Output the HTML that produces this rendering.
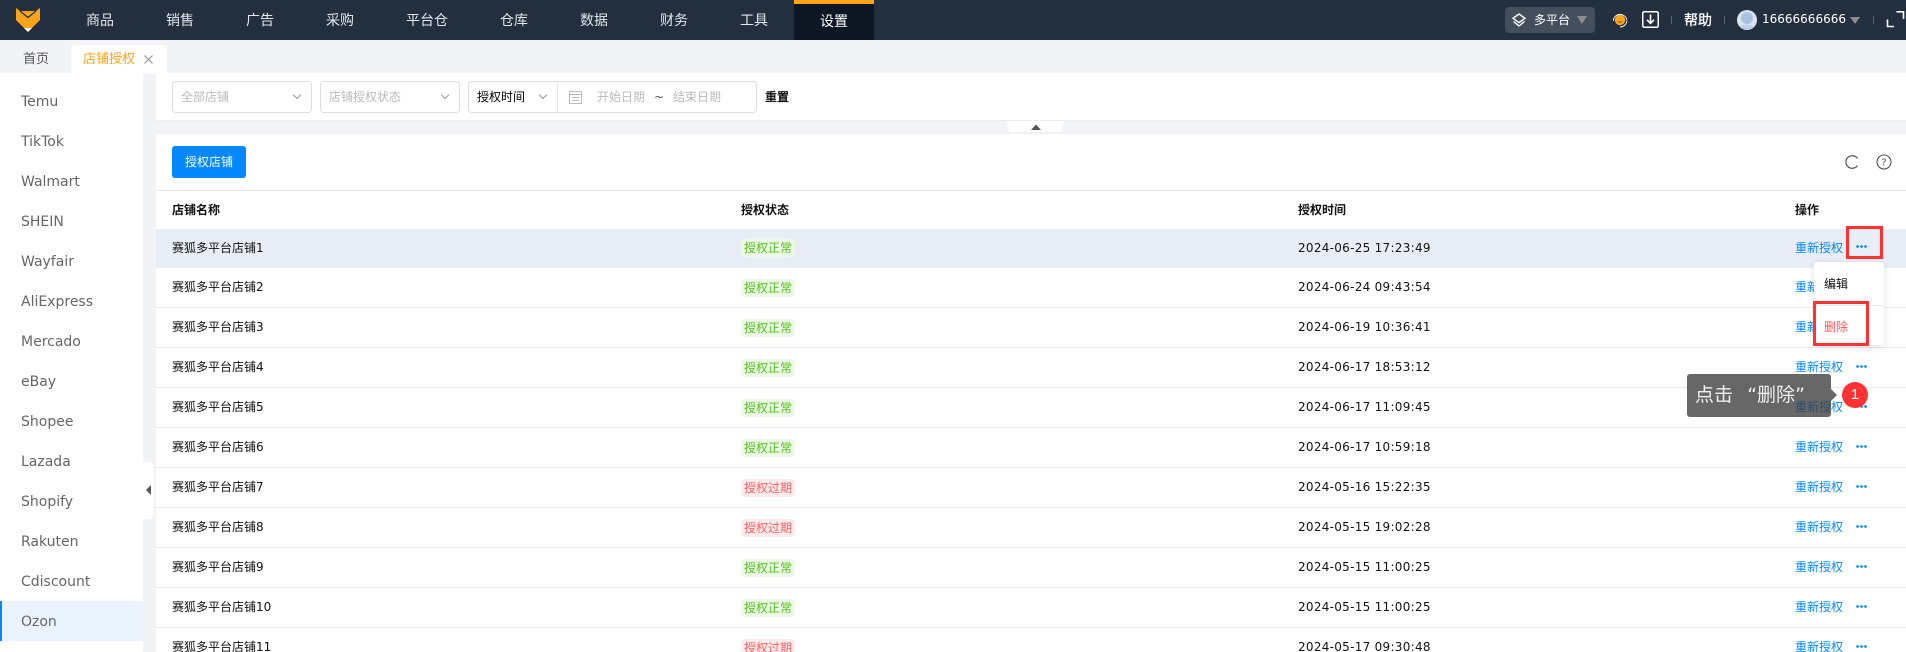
<!DOCTYPE html>
<html lang="zh"><head><meta charset="utf-8"><title>店铺授权</title>
<style>
*{box-sizing:border-box;margin:0;padding:0}
html,body{width:1906px;height:652px;overflow:hidden;background:#f2f3f7}
body{position:relative;font-family:"DejaVu Sans","Noto Sans CJK SC",sans-serif;font-size:12px;color:#111}
.a{position:absolute;white-space:nowrap}
#top{left:0;top:0;width:1906px;height:40px;background:#232f3f}
.nav{position:absolute;top:0;height:40px;line-height:43px;text-align:center;color:#e3e6ea;font-size:14px}
.sel{position:absolute;top:81px;height:32px;border:1px solid #dcdde2;border-radius:4px;background:#fff;line-height:30px;color:#bbb}
.chev{position:absolute;width:6px;height:6px;border-right:1px solid #999;border-bottom:1px solid #999;transform:rotate(45deg)}
.side{position:absolute;left:0;width:143px;height:40px;line-height:42px;padding-left:21px;font-size:14px;color:#666}
.row{position:absolute;left:156px;width:1750px;height:40px;border-bottom:1px solid #ebebeb;line-height:39px}
.row span{position:absolute;top:0;white-space:nowrap}
.n{left:16px}
.t{left:1142px;letter-spacing:.28px}
.o{left:1639px;color:#0488ff}
.row .d{left:1700px;width:11px;height:3px;top:17px;background:radial-gradient(circle at 1.5px 1.5px,#0488ff 1.2px,transparent 1.5px) 0 0/4px 3px repeat-x}
.row .g,.row .r{left:585px;top:11px;width:54px;height:18px;line-height:18px;border-radius:4px;text-align:center}
.g{background:#edf8e8;color:#52c41a}
.r{background:#ffeded;color:#ff5f5f}
.row.f{line-height:38px}
.row.f .g{top:10px}
.row.f .d{top:16px}
.th{position:absolute;top:191px;line-height:38px;font-weight:700;color:#111;white-space:nowrap}
.med{-webkit-text-stroke:.3px currentColor}
</style></head><body>

<div class="a" id="top"></div>
<svg class="a" style="left:14px;top:6px" width="28" height="28" viewBox="0 0 28 28">
<path d="M2 2 L6 5 L22 5 L26 2 V14 L14 26 L2 14Z" fill="#ffa31a"/>
<path d="M6 5 L14 11.5 L22 5" fill="none" stroke="#232f3f" stroke-width="1.3"/>
<path d="M10 22 H18 L14 26Z" fill="#fff"/>
</svg>
<div class="nav" style="left:60px;width:80px">商品</div>
<div class="nav" style="left:140px;width:80px">销售</div>
<div class="nav" style="left:220px;width:80px">广告</div>
<div class="nav" style="left:300px;width:80px">采购</div>
<div class="nav" style="left:380px;width:94px">平台仓</div>
<div class="nav" style="left:474px;width:80px">仓库</div>
<div class="nav" style="left:554px;width:80px">数据</div>
<div class="nav" style="left:634px;width:80px">财务</div>
<div class="nav" style="left:714px;width:80px">工具</div>
<div class="nav" style="left:794px;width:80px;background:#0d1723;border-top:4px solid #ffa31a;line-height:36px;color:#fff">设置</div>

<div class="a" style="left:1505px;top:7px;width:90px;height:26px;background:#454e5c;border-radius:4px"></div>
<svg class="a" style="left:1511px;top:12px" width="16" height="16" viewBox="0 0 16 16" fill="none" stroke="#fff" stroke-width="1.4"><path d="M8 2 L14 6.300 L8 10.600 L2 6.300Z"/><path d="M2.600 9.500 L8 14 L13.400 9.500"/></svg>
<div class="a" style="left:1534px;top:7px;line-height:26px;color:#fff;font-size:12px">多平台</div>
<div class="a" style="left:1577px;top:16px;border:5.500px solid transparent;border-top:8px solid #8a8d92;border-bottom:0"></div>
<svg class="a" style="left:1612px;top:11px" width="18" height="18" viewBox="0 0 18 18"><circle cx="8" cy="9" r="5.200" fill="#ffa31a"/><path d="M1.300 10A6.800 6.800 0 0 1 14.800 9M15 9.500A7 7 0 0 1 8 16" fill="none" stroke="#fff" stroke-width=".9"/><path d="M5.800 10.300q2.200 1.800 4.400 0" fill="none" stroke="#7a4a00" stroke-width=".9"/></svg>
<svg class="a" style="left:1642px;top:11px" width="17" height="17" viewBox="0 0 17 17" fill="none"><rect x=".75" y=".75" width="15.500" height="15.500" rx="1.500" stroke="#fff" stroke-width="1.500"/><path d="M8.500 3.500V12M5 8.800L8.500 12.400 12 8.800" stroke="#fff" stroke-width="1.600"/></svg>
<div class="a" style="left:1671px;top:16px;width:1px;height:8px;background:#5a6470"></div>
<div class="a med" style="left:1684px;top:0;line-height:42px;color:#fff;font-size:14px">帮助</div>
<div class="a" style="left:1724px;top:16px;width:1px;height:8px;background:#5a6470"></div>
<svg class="a" style="left:1737px;top:10px" width="20" height="20" viewBox="0 0 20 20"><circle cx="10" cy="10" r="10" fill="#dbe3ee"/><circle cx="10" cy="8" r="6" fill="#a9c2e4"/><path d="M3 17q7-5 14 0q-7 6-14 0Z" fill="#bcd0ea"/></svg>
<div class="a" style="left:1762px;top:0;line-height:39px;color:#fff">16666666666</div>
<div class="a" style="left:1850px;top:17px;border:5px solid transparent;border-top:7px solid #8a8d92;border-bottom:0"></div>
<div class="a" style="left:1873px;top:16px;width:1px;height:8px;background:#5a6470"></div>
<svg class="a" style="left:1886px;top:10px" width="20" height="20" viewBox="0 0 20 20" fill="none" stroke="#fff" stroke-width="1.600"><path d="M1.500 9.500V16.500H8M10.500 1.800H17.500V9"/></svg>

<!-- tabs -->
<div class="a" style="left:23px;top:45px;line-height:29px;font-size:13px;color:#555">首页</div>
<div class="a" style="left:71px;top:45px;width:96px;height:29px;background:#fff;border-radius:3px 3px 0 0"></div>
<div class="a" style="left:83px;top:45px;line-height:29px;font-size:13px;color:#ffa31a">店铺授权</div>
<svg class="a" style="left:144px;top:55px" width="9" height="9" viewBox="0 0 9 9" stroke="#8f8f8f" stroke-width="1"><path d="M.5 .5L8.500 8.500M8.500 .5L.5 8.500"/></svg>

<!-- sidebar -->
<div class="a" style="left:0;top:73px;width:143px;height:579px;background:#fff"></div>
<div class="side" style="top:81px">Temu</div>
<div class="side" style="top:121px">TikTok</div>
<div class="side" style="top:161px">Walmart</div>
<div class="side" style="top:201px">SHEIN</div>
<div class="side" style="top:241px">Wayfair</div>
<div class="side" style="top:281px">AliExpress</div>
<div class="side" style="top:321px">Mercado</div>
<div class="side" style="top:361px">eBay</div>
<div class="side" style="top:401px">Shopee</div>
<div class="side" style="top:441px">Lazada</div>
<div class="side" style="top:481px">Shopify</div>
<div class="side" style="top:521px">Rakuten</div>
<div class="side" style="top:561px">Cdiscount</div>
<div class="side" style="top:601px;background:#eaf3fe;border-left:2px solid #0488ff;padding-left:19px">Ozon</div>
<div class="a" style="left:143px;top:462px;width:11px;height:57px;background:#fff;border-radius:0 4px 4px 0"></div>
<div class="a" style="left:146px;top:485px;border:5px solid transparent;border-right:5px solid #555;border-left:0"></div>

<!-- filter -->
<div class="a" style="left:156px;top:73px;width:1750px;height:48px;background:#fff;border-bottom:1px solid #ececec"></div>
<div class="sel" style="left:172px;width:140px;padding-left:8px">全部店铺<i class="chev" style="right:11px;top:10px"></i></div>
<div class="sel" style="left:320px;width:140px;padding-left:8px">店铺授权状态<i class="chev" style="right:11px;top:10px"></i></div>
<div class="sel" style="left:468px;width:289px"></div>
<div class="a" style="left:477px;top:81px;line-height:32px;color:#000">授权时间</div>
<i class="chev" style="left:540px;top:92px"></i>
<div class="a" style="left:557px;top:82px;width:1px;height:30px;background:#e6e6e6"></div>
<svg class="a" style="left:569px;top:90px" width="13" height="14" viewBox="0 0 13 14" fill="none" stroke="#bbb"><rect x=".5" y="1.500" width="12" height="12"/><path d="M.5 4.500H12.500M3 7.500H10M3 10.500H10"/></svg>
<div class="a" style="left:597px;top:81px;line-height:32px;color:#bbb">开始日期</div>
<div class="a" style="left:654px;top:81px;line-height:32px;color:#555">~</div>
<div class="a" style="left:673px;top:81px;line-height:32px;color:#bbb">结束日期</div>
<div class="a med" style="left:765px;top:81px;line-height:32px;color:#000">重置</div>
<svg class="a" style="left:1007px;top:121px" width="58" height="12" viewBox="0 0 58 12"><path d="M0 0H57L55 10Q54.700 11 53 11H4Q2.300 11 2 10Z" fill="#fff"/><path d="M24 9L29 3.500 34 9Z" fill="#555"/></svg>

<!-- main -->
<div class="a" style="left:156px;top:134px;width:1750px;height:518px;background:#fff"></div>
<div class="a" style="left:172px;top:146px;width:74px;height:32px;background:#0488ff;border-radius:3px;color:#fff;text-align:center;line-height:32px">授权店铺</div>
<svg class="a" style="left:1844px;top:154px" width="16" height="16" viewBox="0 0 16 16" fill="none" stroke="#555" stroke-width="1.200"><path d="M13.500 4.500A6.300 6.300 0 1 0 13.500 11.500"/></svg>
<svg class="a" style="left:1876px;top:154px" width="16" height="16" viewBox="0 0 16 16"><circle cx="8" cy="8" r="7" fill="none" stroke="#555" stroke-width="1.100"/><text x="8" y="11.500" text-anchor="middle" font-size="10" fill="#555" font-family="DejaVu Sans">?</text></svg>
<div class="a" style="left:156px;top:190px;width:1750px;height:1px;background:#e5e5e5"></div>
<div class="th" style="left:172px">店铺名称</div>
<div class="th" style="left:741px">授权状态</div>
<div class="th" style="left:1298px">授权时间</div>
<div class="th" style="left:1795px">操作</div>

<div class="row f" style="top:229px;height:39px;background:#e9eef6;border-bottom:0"><span class="n">赛狐多平台店铺1</span><span class="g">授权正常</span><span class="t">2024-06-25 17:23:49</span><span class="o">重新授权</span><span class="d"></span></div>
<div class="row" style="top:268px"><span class="n">赛狐多平台店铺2</span><span class="g">授权正常</span><span class="t">2024-06-24 09:43:54</span><span class="o">重新授权</span><span class="d"></span></div>
<div class="row" style="top:308px"><span class="n">赛狐多平台店铺3</span><span class="g">授权正常</span><span class="t">2024-06-19 10:36:41</span><span class="o">重新授权</span><span class="d"></span></div>
<div class="row" style="top:348px"><span class="n">赛狐多平台店铺4</span><span class="g">授权正常</span><span class="t">2024-06-17 18:53:12</span><span class="o">重新授权</span><span class="d"></span></div>
<div class="row" style="top:388px"><span class="n">赛狐多平台店铺5</span><span class="g">授权正常</span><span class="t">2024-06-17 11:09:45</span><span class="o">重新授权</span><span class="d"></span></div>
<div class="row" style="top:428px"><span class="n">赛狐多平台店铺6</span><span class="g">授权正常</span><span class="t">2024-06-17 10:59:18</span><span class="o">重新授权</span><span class="d"></span></div>
<div class="row" style="top:468px"><span class="n">赛狐多平台店铺7</span><span class="r">授权过期</span><span class="t">2024-05-16 15:22:35</span><span class="o">重新授权</span><span class="d"></span></div>
<div class="row" style="top:508px"><span class="n">赛狐多平台店铺8</span><span class="r">授权过期</span><span class="t">2024-05-15 19:02:28</span><span class="o">重新授权</span><span class="d"></span></div>
<div class="row" style="top:548px"><span class="n">赛狐多平台店铺9</span><span class="g">授权正常</span><span class="t">2024-05-15 11:00:25</span><span class="o">重新授权</span><span class="d"></span></div>
<div class="row" style="top:588px"><span class="n">赛狐多平台店铺10</span><span class="g">授权正常</span><span class="t">2024-05-15 11:00:25</span><span class="o">重新授权</span><span class="d"></span></div>
<div class="row" style="top:628px"><span class="n">赛狐多平台店铺11</span><span class="r">授权过期</span><span class="t">2024-05-17 09:30:48</span><span class="o">重新授权</span><span class="d"></span></div>

<!-- dropdown -->
<div class="a" style="left:1814px;top:262px;width:70px;height:83px;background:#fff;border-radius:3px;box-shadow:0 2px 8px rgba(0,0,0,.12)"></div>
<div class="a" style="left:1814px;top:305px;width:70px;height:1px;background:#ececec"></div>
<div class="a" style="left:1824px;top:272px;line-height:24px;color:#111">编辑</div>
<div class="a" style="left:1824px;top:315px;line-height:24px;color:#f55">删除</div>

<!-- annotation boxes -->
<div class="a" style="left:1846px;top:226px;width:37px;height:33px;border:3px solid #f33"></div>
<div class="a" style="left:1813px;top:301px;width:56px;height:45px;border:3px solid #f33"></div>

<!-- tooltip -->
<div class="a" style="left:1687px;top:374px;width:144px;height:43px;background:rgba(60,60,60,.78);border-radius:3px;color:#f0f0f0;font-size:19px;line-height:43px;padding-left:8px">点击 <span style="display:inline-block;width:18px;text-align:right">“</span>删除<span style="display:inline-block;width:10px;text-align:left">”</span></div>
<div class="a" style="left:1831px;top:389px;border:6px solid transparent;border-left:6px solid rgba(60,60,60,.78);border-right:0"></div>
<div class="a" style="left:1842px;top:382px;width:26px;height:26px;border-radius:50%;background:#f33;color:#fff;font-size:15px;line-height:25px;text-align:center;font-family:'Liberation Sans',sans-serif">1</div>

</body></html>
